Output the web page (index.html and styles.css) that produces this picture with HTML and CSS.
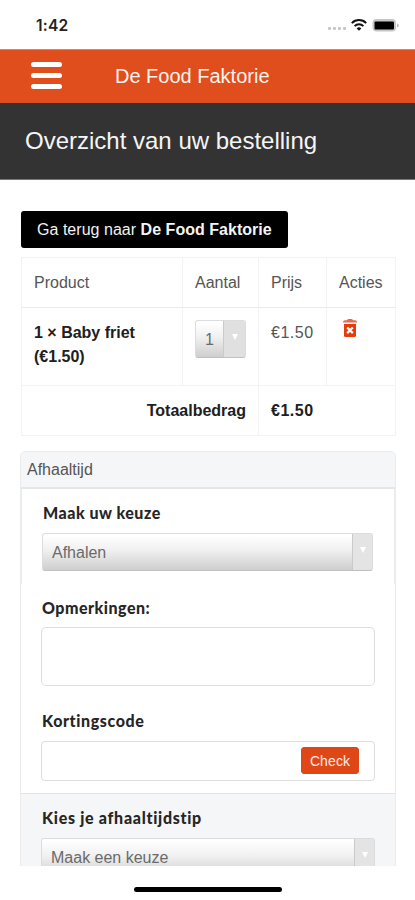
FILE: index.html
```html
<!DOCTYPE html>
<html lang="nl">
<head>
<meta charset="utf-8">
<title>Overzicht van uw bestelling</title>
<link rel="stylesheet" href="styles.css">
</head>
<body>
<div class="status">
  <span class="time">1:42</span>
  <svg class="status-icons" width="74" height="16" viewBox="0 0 74 16">
    <g fill="#c6c6c6"><rect x="1" y="9" width="3" height="3" rx="1"/><rect x="6" y="9" width="3" height="3" rx="1"/><rect x="11" y="9" width="3" height="3" rx="1"/><rect x="16" y="9" width="3" height="3" rx="1"/></g>
    <g fill="none" stroke="#111" stroke-width="2"><path d="M24.8 5.1a10.2 10.2 0 0 1 14.4 0"/><path d="M27.6 8.1a6.2 6.2 0 0 1 8.800 0"/></g>
    <path d="M32 12.700l-2.300-2.300a3.300 3.300 0 0 1 4.600 0z" fill="#111"/>
    <rect x="46" y="1.500" width="22.500" height="11.500" rx="3" fill="#c8c8c8" stroke="#c4c4c4"/>
    <rect x="47.500" y="3.500" width="19.500" height="8" rx="1" fill="#000"/>
    <path d="M70 5.500v4q1.800-.5 1.800-2t-1.800-2z" fill="#b9b9b9"/>
  </svg>
</div>
<header class="bar">
  <div class="burger"><i></i><i></i><i></i></div>
  <span>De Food Faktorie</span>
</header>
<h1>Overzicht van uw bestelling</h1>
<main>
  <a class="back">Ga terug naar <b>De Food Faktorie</b></a>
  <table>
    <colgroup><col class="c1"><col class="c2"><col class="c3"><col class="c4"></colgroup>
    <tr class="head"><th>Product</th><th>Aantal</th><th>Prijs</th><th>Acties</th></tr>
    <tr class="item">
      <td><b>1 × Baby friet (€1.50)</b></td>
      <td><div class="select qty"><span>1</span><em><i></i></em></div></td>
      <td class="price">€1.50</td>
      <td><svg class="trash" width="16" height="20" viewBox="0 0 16 20">
        <path d="M1 4Q1 2.200 3 2.200h2L6 1h4l1 1.200h2q2 0 2 1.800v.5H1z" fill="#e86a48"/>
        <path d="M2 6h12v11.500q0 1.500-1.500 1.500h-9Q2 19 2 17.500z" fill="#e23d0c"/>
        <path d="M5.200 9.500l5.600 5.600M10.800 9.500l-5.600 5.600" stroke="#fff" stroke-width="2.200"/>
      </svg></td>
    </tr>
    <tr class="total"><td colspan="2"><b>Totaalbedrag</b></td><td colspan="2" class="price"><b>€1.50</b></td></tr>
  </table>
  <section class="card">
    <h2>Afhaaltijd</h2>
    <div class="choice">
      <label class="l1">Maak uw keuze</label>
      <div class="select"><span>Afhalen</span><em><i></i></em></div>
    </div>
    <div class="details">
      <label class="l2">Opmerkingen:</label>
      <div class="area"></div>
      <label class="l3">Kortingscode</label>
      <div class="coupon"><button>Check</button></div>
    </div>
    <div class="slot">
      <label class="l4">Kies je afhaaltijdstip</label>
      <div class="select"><span>Maak een keuze</span><em><i></i></em></div>
    </div>
  </section>
</main>
<footer><div class="home"></div></footer>
</body>
</html>
```
FILE: styles.css
```css
* { box-sizing: border-box; }
body { margin: 0; width: 415px; height: 900px; overflow: hidden; background: #fff; color: #555; font: 16px/24px "Liberation Sans", Arial, sans-serif; display: flex; flex-direction: column; }
.status { height: 49px; flex: none; display: flex; justify-content: space-between; padding: 13px 14px 0 36px; }
.time { font: 600 15.5px/25px Inter, sans-serif; color: #222; letter-spacing: .2px; }
.status-icons { margin-top: 5px; }
.bar { height: 54px; flex: none; display: flex; align-items: center; padding: 0 0 2px 31px; background: #e04e1d; border-top: 1px solid #e8805f; color: #fff3ed; font-size: 20px; }
.burger { width: 31px; margin-right: 53px; display: grid; gap: 6px; }
.burger i { height: 5px; border-radius: 3px; background: #fff; }
h1 { margin: 0; height: 77px; flex: none; padding-left: 25px; background: #333; border-bottom: 1px solid #777; color: #f5f5f5; font-size: 24px; font-weight: 400; line-height: 76px; }
main { height: 686px; flex: none; overflow: hidden; padding: 31px 19px 0 20px; }
.back { display: block; width: 267px; height: 37px; margin-left: 1px; padding-left: 16px; border-radius: 3px; background: #000; color: #f2f2f2; line-height: 38px; white-space: nowrap; letter-spacing: .03px; }
table { width: 375px; margin: 9px 0 0 1px; table-layout: fixed; border-collapse: separate; border-spacing: 0; border-top: 1px solid #f3f3f3; border-left: 1px solid #f3f3f3; }
.c1 { width: 161px; } .c2 { width: 76px; } .c3 { width: 68px; } .c4 { width: 69px; }
th, td { padding: 0 12px; text-align: left; font-weight: 400; border-right: 1px solid #f3f3f3; border-bottom: 1px solid #f3f3f3; }
.head th { height: 50px; padding-top: 1px; border-bottom-color: #e9ebeb; }
.item td { height: 78px; vertical-align: top; padding-top: 13px; }
.item td:first-child { padding-right: 30px; }
.total td { height: 50px; }
.total td:first-child { text-align: right; }
b { color: #202020; }
.back b { color: #f5f5f5; }
.price { letter-spacing: .5px; }
.trash { display: block; margin: -3px 0 0 3px; }
.select { height: 38px; display: flex; border: 1px solid #dcdcdc; border-bottom-color: #c0c0c0; border-radius: 3px; background: linear-gradient(#fff 5%, #f0f0f0 45%, #cecece); color: #6a6a6a; overflow: hidden; }
.select span { flex: 1; padding-left: 9px; line-height: 37px; }
.select em { width: 20px; border-left: 1px solid #cacaca; background: #e4e4e4; display: flex; justify-content: center; padding-top: 13px; }
.select em i { width: 0; height: 0; border: 3px solid transparent; border-top: 6px solid #fff; }
.qty { width: 51px; height: 38px; margin: -1px 0 0; }
.qty em { width: 22px; background: #e0e0e0; }
.card { height: 450px; width: 376px; margin-top: 15px; border: 1px solid #ebebeb; border-radius: 5px; }
h2 { margin: 0; height: 37px; padding-left: 6px; background: #f5f6f8; border-bottom: 2px solid #e6e6e6; border-radius: 4px 4px 0 0; font-size: 16px; line-height: 36px; font-weight: 400; }
.choice { height: 95px; padding: 12px 21px 0; border: solid #ececec; border-width: 0 1px; }
label { display: block; height: 24px; font: 900 16px/24px Lato, sans-serif; color: #262626; }
.choice .select { margin: 8px 0 0 -1px; width: 331px; }
.details { height: 209px; padding: 12px 20px 0; }
.area { height: 59px; width: 334px; margin: 7px 0 23px; border: 1px solid #dedede; border-radius: 5px; }
.coupon { height: 40px; width: 334px; margin-top: 8px; padding: 5px 15px 0; border: 1px solid #dedede; border-radius: 4px; display: flex; justify-content: flex-end; align-items: flex-start; }
button { width: 58px; height: 27px; padding: 0; border: 1px solid #d6491a; border-radius: 3px; background: #e04717; color: #ffece5; font: 14px "Liberation Sans", sans-serif; letter-spacing: .1px; }
.slot { height: 107px; padding: 12px 20px 0; border-top: 1px solid #e2e2e2; background: #f5f6f8; }
.slot .select { width: 334px; margin-top: 8px; height: 40px; }
.l1 { letter-spacing: .5px; } .l2 { letter-spacing: .5px; padding-left: 1px; } .l3 { letter-spacing: .6px; padding-left: 1px; } .l4 { letter-spacing: .7px; padding-left: 1px; }
footer { height: 34px; flex: none; display: flex; justify-content: center; padding-top: 21px; }
.home { width: 148px; height: 5px; border-radius: 3px; background: #000; }
```
